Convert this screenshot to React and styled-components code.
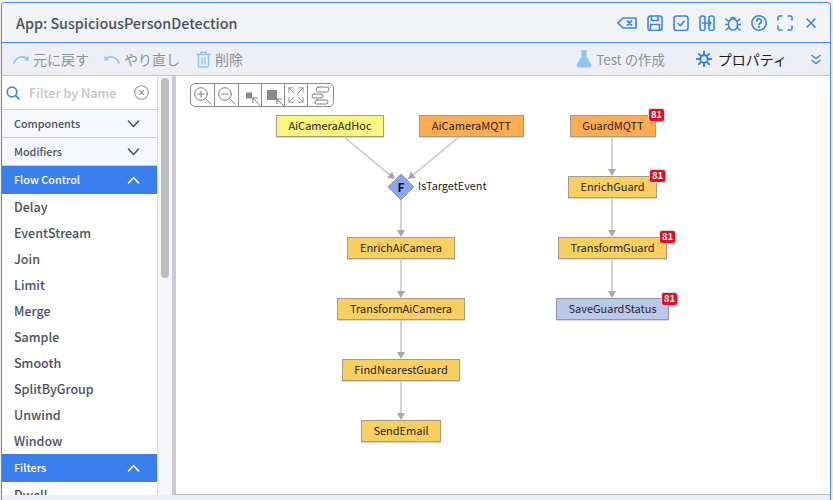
import React from 'react';
import styled, { createGlobalStyle } from 'styled-components';

const FONT = `"Noto Sans CJK JP", "Noto Sans", sans-serif`;
const BLUE = '#3a86ef';
const LIGHT = '#8fc3f8';

const Global = createGlobalStyle`
  html, body { margin: 0; padding: 0; height: 100%; overflow: hidden; background: #f1f1f2; font-family: ${FONT}; }
  #root { height: 100%; }
`;

const Page = styled.div`
  width: 833px;
  height: 500px;
  padding: 2px 2px 0 1px;
  box-sizing: border-box;
  overflow: hidden;
`;
const Win = styled.div`
  height: 498px;
  box-sizing: border-box;
  display: flex;
  flex-direction: column;
  border: 1px solid #4a8aea;
  border-bottom: none;
  border-radius: 4px 4px 0 0;
  background: #eef0f5;
  overflow: hidden;
`;
const TitleBar = styled.div`
  height: 39px;
  flex: none;
  display: flex;
  align-items: center;
  padding: 0 13px 0 14px;
  background: #f2f3f5;
  border-bottom: 1px solid #4a8aea;
`;
const Title = styled.div`
  flex: 1;
  font-size: 14.3px;
  font-weight: 500;
  color: #4a5160;
`;
const TitleIcons = styled.div`
  display: flex;
  align-items: center;
  gap: 10px;
`;
const CloseSlot = styled.span`
  display: flex;
  margin-left: 2px;
`;
const Toolbar = styled.div`
  height: 32px;
  flex: none;
  display: flex;
  align-items: center;
  padding: 0 9px 0 11px;
  background: #edeff5;
  border-bottom: 1px solid #c6c7cf;
`;
const ToolGroup = styled.div`
  display: flex;
  align-items: center;
  gap: 4px;
  margin-right: ${p => p.$mr || 0}px;
  color: ${p => p.$dark ? '#1c1c20' : '#8e9196'};
  font-size: ${p => p.$size || 14}px;
  white-space: nowrap;
`;
const Spacer = styled.div`flex: 1;`;
const GearSlot = styled.span`
  display: flex;
  margin-right: 2px;
`;
const Body = styled.div`
  display: flex;
  height: 419px;
  flex: none;
`;
const Sidebar = styled.div`
  width: 155px;
  flex: none;
  background: #fff;
  overflow: hidden;
  border-right: 1px solid #dcdde2;
`;
const Search = styled.div`
  height: 34px;
  box-sizing: border-box;
  display: flex;
  align-items: center;
  padding: 0 8px 0 4px;
  border-bottom: 1px solid #c9cad2;
`;
const Placeholder = styled.div`
  flex: 1;
  margin-left: 9px;
  font-size: 12.6px;
  font-weight: 500;
  color: #c4c5c8;
`;
const Section = styled.div`
  height: 28px;
  box-sizing: border-box;
  display: flex;
  align-items: center;
  justify-content: space-between;
  padding: 0 17px 0 12px;
  font-size: 10.8px;
  font-weight: 500;
  color: ${p => p.$open ? '#fff' : '#4a5160'};
  background: ${p => p.$open ? '#3b7eee' : '#f7f8fd'};
  border-bottom: ${p => p.$open ? 'none' : '1px solid #c9cad2'};
`;
const SectionLabel = styled.span`
  margin-top: -2px;
`;
const Item = styled.div`
  height: 26px;
  line-height: 26px;
  padding-left: 12px;
  font-size: 12.5px;
  font-weight: 500;
  color: #4a5160;
`;
const Scroll = styled.div`
  width: 14px;
  flex: none;
  background: #f6f6f8;
  display: flex;
  justify-content: center;
  padding-top: 2px;
  box-sizing: border-box;
`;
const Thumb = styled.div`
  width: 8px;
  height: 200px;
  border-radius: 4px;
  background: #bdbdbd;
`;
const Divider = styled.div`
  width: 4px;
  flex: none;
  background: #c9cbd3;
`;
const Canvas = styled.div`
  position: relative;
  flex: 1;
  background: #fff;
  overflow: hidden;
  border-bottom: 1px solid #bcbcbf;
`;
const Bottom = styled.div`
  flex: 1;
  background: #eef0f5;
`;
const ZoomBar = styled.div`
  position: absolute;
  left: 14px;
  top: 7px;
  height: 24px;
  box-sizing: border-box;
  display: flex;
  border: 1px solid #8a8a8a;
  border-radius: 5px;
  background: #fff;
`;
const ZoomCell = styled.div`
  width: ${p => p.$w}px;
  box-sizing: border-box;
  display: flex;
  align-items: center;
  justify-content: center;
  border-left: ${p => p.$first ? 'none' : '1px solid #8a8a8a'};
`;
const Edges = styled.svg`
  position: absolute;
  left: 0;
  top: 0;
`;
const Node = styled.div`
  position: absolute;
  box-sizing: border-box;
  display: flex;
  align-items: center;
  justify-content: center;
  height: 22px;
  padding-bottom: 2px;
  border: 1px solid #a29c86;
  box-shadow: 0 1px 0 #d8d8d8;
  font-size: 11px;
  color: #25252a;
  white-space: nowrap;
  background: ${p => ({ yellow: '#fdf57c', orange: '#ffab50', gold: '#fbcf5f', blue: '#bac8ea' }[p.$kind])};
  border-color: ${p => p.$kind === 'blue' ? '#9297a8' : '#a49d84'};
`;
const Badge = styled.div`
  position: absolute;
  width: 17px;
  height: 14px;
  border-radius: 3px;
  background: #f0061e;
  border: 1px solid #d9d9dc;
  box-sizing: border-box;
  color: #fff;
  font-size: 9.5px;
  font-weight: 700;
  display: flex;
  align-items: center;
  justify-content: center;
  line-height: 1;
`;
const Diamond = styled.svg`
  position: absolute;
`;
const DiamondLabel = styled.div`
  position: absolute;
  font-size: 10.9px;
  color: #25252a;
  white-space: nowrap;
  line-height: 16px;
`;

const Ic = ({ w = 16, h = 16, vb, sw = 1.6, color = BLUE, children }) => (
  <svg width={w} height={h} viewBox={vb || `0 0 ${w} ${h}`} fill="none" stroke={color} strokeWidth={sw} strokeLinecap="round" strokeLinejoin="round">{children}</svg>
);

const OX = 176, OY = 76;
const nodes = [
  ['AiCameraAdHoc', 276, 115, 108, 'yellow'],
  ['AiCameraMQTT', 419, 115, 105, 'orange'],
  ['GuardMQTT', 570, 115, 86, 'orange'],
  ['EnrichGuard', 568, 176, 89, 'gold'],
  ['TransformGuard', 558, 237, 109, 'gold'],
  ['SaveGuardStatus', 556, 298, 113, 'blue'],
  ['EnrichAiCamera', 347, 237, 108, 'gold'],
  ['TransformAiCamera', 337, 298, 128, 'gold'],
  ['FindNearestGuard', 342, 359, 118, 'gold'],
  ['SendEmail', 361, 420, 80, 'gold'],
];
const badges = [[648, 108], [649, 169], [659, 230], [661, 292]];
const edges = [
  [344, 137, 395, 179], [459, 137, 408, 179],
  [401, 200, 401, 237], [401, 259, 401, 298], [401, 320, 401, 359], [401, 381, 401, 420],
  [612, 137, 612, 176], [612, 198, 612, 237], [612, 259, 612, 298],
];

function arrow([x1, y1, x2, y2], i) {
  const dx = x2 - x1, dy = y2 - y1, l = Math.hypot(dx, dy), ux = dx / l, uy = dy / l;
  const ax = x2 - OX, ay = y2 - OY, bx = ax - ux * 7, by = ay - uy * 7;
  const px = -uy * 4, py = ux * 4;
  return (
    <g key={i}>
      <line x1={x1 - OX} y1={y1 - OY} x2={bx} y2={by} stroke="#c9c9c9" strokeWidth="1.6" />
      <polygon points={`${ax},${ay} ${bx + px},${by + py} ${bx - px},${by - py}`} fill="#a8a8a8" />
    </g>
  );
}

const Chevron = ({ up, color }) => (
  <Ic w={13} h={8} sw={1.5} color={color}>
    <path d={up ? 'M1.5 7 L6.5 1.5 L11.5 7' : 'M1.5 1 L6.5 6.5 L11.5 1'} />
  </Ic>
);

export default function App() {
  return (
    <Page>
      <Global />
      <Win>
        <TitleBar>
          <Title>App: SuspiciousPersonDetection</Title>
          <TitleIcons>
            <Ic w={20} h={14}>
              <path d="M6 2 H19 V12 H6 L1 7 Z" />
              <path d="M10.5 5 L14.5 9 M14.5 5 L10.5 9" strokeWidth="1.8" />
            </Ic>
            <Ic>
              <rect x="1" y="1" width="14" height="14.5" rx="2.5" />
              <path d="M4.5 1 V5.5 H11 V1 M3.5 15 V9.5 H12.5 V15" />
            </Ic>
            <Ic>
              <rect x="1" y="1" width="14" height="14.5" rx="2.5" />
              <path d="M5 8.5 L7.3 10.8 L11.3 6" />
            </Ic>
            <Ic>
              <rect x="1" y="1" width="5" height="14.5" rx="2" />
              <rect x="10" y="1" width="5" height="14.5" rx="2" />
              <path d="M3.5 8 H12 M9.5 5.5 L12 8 L9.5 10.5" />
            </Ic>
            <Ic>
              <ellipse cx="8" cy="9.5" rx="4.6" ry="5.5" />
              <path d="M5.5 4.5 A2.6 2.6 0 0 1 10.5 4.5 M1 4 L3.6 6.5 M15 4 L12.4 6.5 M0.5 9.5 H3.4 M15.5 9.5 H12.6 M1 15 L3.8 12.5 M15 15 L12.2 12.5" />
            </Ic>
            <Ic>
              <circle cx="8" cy="8" r="7.2" />
              <path d="M5.8 6.2 A2.3 2.3 0 1 1 8.6 8.4 C8.1 8.6 8 9 8 9.6" />
              <circle cx="8" cy="12" r=".4" />
            </Ic>
            <Ic>
              <path d="M1 5 V2.5 A1.5 1.5 0 0 1 2.5 1 H5 M11 1 H13.5 A1.5 1.5 0 0 1 15 2.5 V5 M15 11 V13.5 A1.5 1.5 0 0 1 13.5 15 H11 M5 15 H2.5 A1.5 1.5 0 0 1 1 13.5 V11" />
            </Ic>
            <CloseSlot>
              <Ic w={12} h={12}>
                <path d="M2 2 L10 10 M10 2 L2 10" />
              </Ic>
            </CloseSlot>
          </TitleIcons>
        </TitleBar>
        <Toolbar>
          <ToolGroup $mr={15}>
            <Ic w={16} h={10} color={LIGHT}>
              <path d="M1 9 C3 3 10 1 14.5 5" />
              <path d="M15.5 1.5 V6.5 H11" fill={LIGHT} stroke="none" />
            </Ic>
            元に戻す
          </ToolGroup>
          <ToolGroup $mr={16}>
            <Ic w={16} h={10} color={LIGHT}>
              <path d="M15 9 C13 3 6 1 1.5 5" />
              <path d="M.5 1.5 V6.5 H5" fill={LIGHT} stroke="none" />
            </Ic>
            やり直し
          </ToolGroup>
          <ToolGroup>
            <Ic w={15} h={17} color={LIGHT} sw={1.4}>
              <path d="M1 3.5 H14 M5 3 V1.2 H10 V3 M2.5 4 V15 A1.2 1.2 0 0 0 3.7 16 H11.3 A1.2 1.2 0 0 0 12.5 15 V4 M6 7 V13 M9 7 V13" />
            </Ic>
            削除
          </ToolGroup>
          <Spacer />
          <ToolGroup $mr={31} $size={13.4}>
            <Ic w={16} h={18} color={LIGHT} sw={1}>
              <path d="M5 1 H11 M6 1 V6.5 L1 15 A1.4 1.4 0 0 0 2.3 17 H13.7 A1.4 1.4 0 0 0 15 15 L10 6.5 V1 Z" fill={LIGHT} />
            </Ic>
            Test の作成
          </ToolGroup>
          <ToolGroup $dark $mr={24}>
            <GearSlot>
              <Ic sw={1.9} color="#2f7de8">
                <circle cx="8" cy="8" r="3.8" />
                <path d="M8 .8 V3.5 M8 12.5 V15.2 M.8 8 H3.5 M12.5 8 H15.2 M2.9 2.9 L4.9 4.9 M11.1 11.1 L13.1 13.1 M13.1 2.9 L11.1 4.9 M4.9 11.1 L2.9 13.1" />
              </Ic>
            </GearSlot>
            プロパティ
          </ToolGroup>
          <Ic w={10} h={11} sw={1.5}>
            <path d="M1 1.5 L5 4.5 L9 1.5 M1 6.5 L5 9.5 L9 6.5" />
          </Ic>
        </Toolbar>
        <Body>
          <Sidebar>
            <Search>
              <Ic w={14} h={14} sw={1.7} color="#2f8cf5">
                <circle cx="6" cy="6" r="4.8" />
                <path d="M9.6 9.6 L13 13" />
              </Ic>
              <Placeholder>Filter by Name</Placeholder>
              <Ic w={15} h={15} sw={1.1} color="#9c9c9c">
                <circle cx="7.5" cy="7.5" r="6.8" />
                <path d="M5.5 5.5 L9.5 9.5 M9.5 5.5 L5.5 9.5" />
              </Ic>
            </Search>
            <Section><SectionLabel>Components</SectionLabel><Chevron color="#4a5160" /></Section>
            <Section><SectionLabel>Modifiers</SectionLabel><Chevron color="#4a5160" /></Section>
            <Section $open><SectionLabel>Flow Control</SectionLabel><Chevron up color="#fff" /></Section>
            {['Delay', 'EventStream', 'Join', 'Limit', 'Merge', 'Sample', 'Smooth', 'SplitByGroup', 'Unwind', 'Window'].map(t => <Item key={t}>{t}</Item>)}
            <Section $open><SectionLabel>Filters</SectionLabel><Chevron up color="#fff" /></Section>
            <Item>Dwell</Item>
          </Sidebar>
          <Scroll><Thumb /></Scroll>
          <Divider />
          <Canvas>
            <ZoomBar>
              <ZoomCell $first $w={23}>
                <Ic w={19} h={19} sw={1} color="#808080"><circle cx="8" cy="8" r="6.3" /><path d="M12.5 12.5 L18 18 M5 8 H11 M8 5 V11" /></Ic>
              </ZoomCell>
              <ZoomCell $w={24}>
                <Ic w={19} h={19} sw={1} color="#808080"><circle cx="8" cy="8" r="6.3" /><path d="M12.5 12.5 L18 18 M5 8 H11" /></Ic>
              </ZoomCell>
              <ZoomCell $w={23}>
                <Ic w={22} h={22} sw={1} color="#808080"><rect x="7" y="8.5" width="6" height="6" fill="#8a8a8a" stroke="none" /><path d="M14 14 L21 21.5 M14 14 H18.5 M14 14 V18.5" /></Ic>
              </ZoomCell>
              <ZoomCell $w={23}>
                <Ic w={22} h={22} sw={1} color="#808080"><rect x="5" y="6" width="10" height="10" fill="#8a8a8a" stroke="none" /><path d="M15 15 L21.5 21.5 M15 15 H19.5 M15 15 V19.5" /></Ic>
              </ZoomCell>
              <ZoomCell $w={23}>
                <Ic w={16} h={16} vb="0 0 18 18" sw={1} color="#8a8a8a"><path d="M1 6 V1 H6 M1 1 L6.5 6.5 M12 1 H17 V6 M17 1 L11.5 6.5 M1 12 V17 H6 M1 17 L6.5 11.5 M12 17 H17 V12 M17 17 L11.5 11.5" /></Ic>
              </ZoomCell>
              <ZoomCell $w={26}>
                <Ic w={19} h={19} sw={1} color="#808080"><rect x="5" y="1" width="13" height="5" rx="2.5" /><rect x="1" y="8" width="11" height="4" rx="2" /><rect x="4" y="14" width="13" height="4" rx="2" /></Ic>
              </ZoomCell>
            </ZoomBar>
            <Edges width="656" height="420">{edges.map(arrow)}</Edges>
            <Diamond width="28" height="28" viewBox="0 0 28 28" style={{ left: 387 - OX, top: 173 - OY }}>
              <polygon points="14,1 27,14 14,27 1,14" fill="#88a5f7" stroke="#9a9ca6" strokeWidth="1" />
              <text x="14" y="18.5" textAnchor="middle" fontSize="12" fontWeight="700" fill="#111" fontFamily={FONT}>F</text>
            </Diamond>
            <DiamondLabel style={{ left: 418 - OX, top: 177 - OY }}>IsTargetEvent</DiamondLabel>
            {nodes.map(([t, x, y, w, k]) => (
              <Node key={t} $kind={k} style={{ left: x - OX, top: y - OY, width: w }}>{t}</Node>
            ))}
            {badges.map(([x, y]) => (
              <Badge key={x} style={{ left: x - OX, top: y - OY }}>81</Badge>
            ))}
          </Canvas>
        </Body>
        <Bottom />
      </Win>
    </Page>
  );
}
